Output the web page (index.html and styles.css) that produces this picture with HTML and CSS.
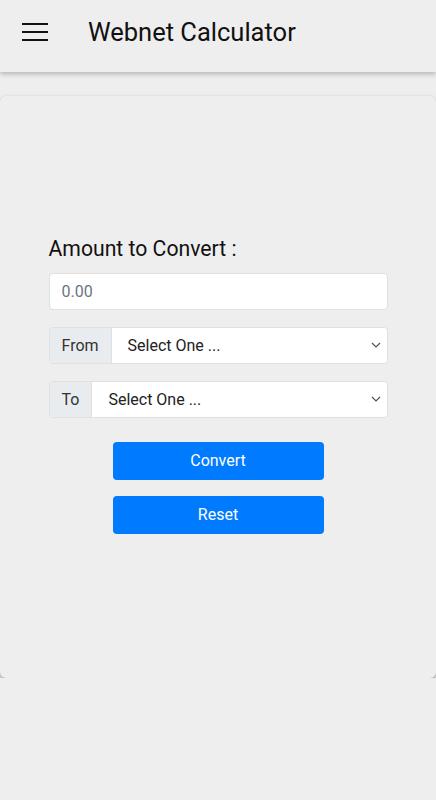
FILE: index.html
```html
<!DOCTYPE html>
<html lang="en">
<head>
  <meta charset="UTF-8">
  <meta name="viewport" content="width=device-width, initial-scale=1.0">
  <title>Webnet Calculator</title>
  <link rel="stylesheet" href="styles.css">
</head>
<body>
  <header class="topbar">
    <button class="menu-btn" aria-label="Menu">
      <svg width="26" height="20" viewBox="0 0 26 20">
        <path d="M0 2h26M0 10h26M0 18h26" stroke="#111" stroke-width="2.2"/>
      </svg>
    </button>
    <h1 class="title">Webnet Calculator</h1>
  </header>

  <main class="card">
    <div class="form">
      <label class="amount-label" for="amount">Amount to Convert :</label>
      <input id="amount" class="field" type="text" placeholder="0.00">

      <div class="group">
        <span class="group-label">From</span>
        <select class="select">
          <option>Select One ...</option>
        </select>
      </div>

      <div class="group">
        <span class="group-label">To</span>
        <select class="select">
          <option>Select One ...</option>
        </select>
      </div>

      <div class="actions">
        <button class="btn">Convert</button>
        <button class="btn">Reset</button>
      </div>
    </div>
  </main>
</body>
</html>
```

FILE: styles.css
```css
body {
  margin: 0;
  font-family: Roboto, "Noto Sans", sans-serif;
  background-color: #eeeeee;
  color: #111;
}
.topbar {
  height: 72px;
  display: flex;
  align-items: center;
  padding: 0 22px;
  background-color: #eeeeee;
  box-shadow: 0 2px 5px rgba(0, 0, 0, 0.25);
  box-sizing: border-box;
}
.menu-btn {
  background: none;
  border: none;
  padding: 0;
  margin-top: -8px;
  display: flex;
}
.title {
  margin: -8px 0 0 40px;
  font-size: 25.5px;
  font-weight: 400;
  color: #111;
}
.card {
  margin: 24px 0 0;
  height: 582px;
  border-radius: 6px;
  background-color: #eeeeee;
  box-shadow: 0 1px 3px rgba(0, 0, 0, 0.15), 0 4px 6px rgba(0, 0, 0, 0.25);
  display: flex;
  align-items: center;
  justify-content: center;
}
.form {
  width: 339px;
  display: flex;
  flex-direction: column;
  margin-bottom: 4px;
}
.amount-label {
  font-size: 21.2px;
  line-height: 24px;
  margin-bottom: 12px;
}
.field {
  height: 37px;
  border: 1px solid #e0e0e0;
  border-radius: 4px;
  padding: 0 12px;
  font-size: 16px;
  font-family: inherit;
  background: #fff;
  box-sizing: border-box;
}
.field::placeholder {
  color: #6c757d;
}
.group {
  display: flex;
  height: 37px;
  margin-top: 17px;
  border: 1px solid #e0e0e0;
  border-radius: 4px;
  overflow: hidden;
  box-sizing: border-box;
}
.group-label {
  display: flex;
  align-items: center;
  padding: 0 12px;
  background-color: #e9ecef;
  border-right: 1px solid #dde0e3;
  font-size: 16px;
  color: #333;
}
.select {
  flex: 1;
  border: none;
  appearance: none;
  -webkit-appearance: none;
  background: #fff url("data:image/svg+xml,%3Csvg xmlns='http://www.w3.org/2000/svg' width='10' height='6' viewBox='0 0 10 6'%3E%3Cpath d='M1 1l4 4 4-4' fill='none' stroke='%23555' stroke-width='1.2'/%3E%3C/svg%3E") no-repeat right 6px center;
  padding: 0 16px;
  font-size: 16px;
  font-family: inherit;
  color: #222;
}
.actions {
  display: flex;
  flex-direction: column;
  align-items: center;
  gap: 16px;
  margin-top: 24px;
}
.btn {
  width: 211px;
  height: 38px;
  border: none;
  border-radius: 4px;
  background-color: #007bff;
  color: #fff;
  font-size: 16px;
  font-family: inherit;
}
```
